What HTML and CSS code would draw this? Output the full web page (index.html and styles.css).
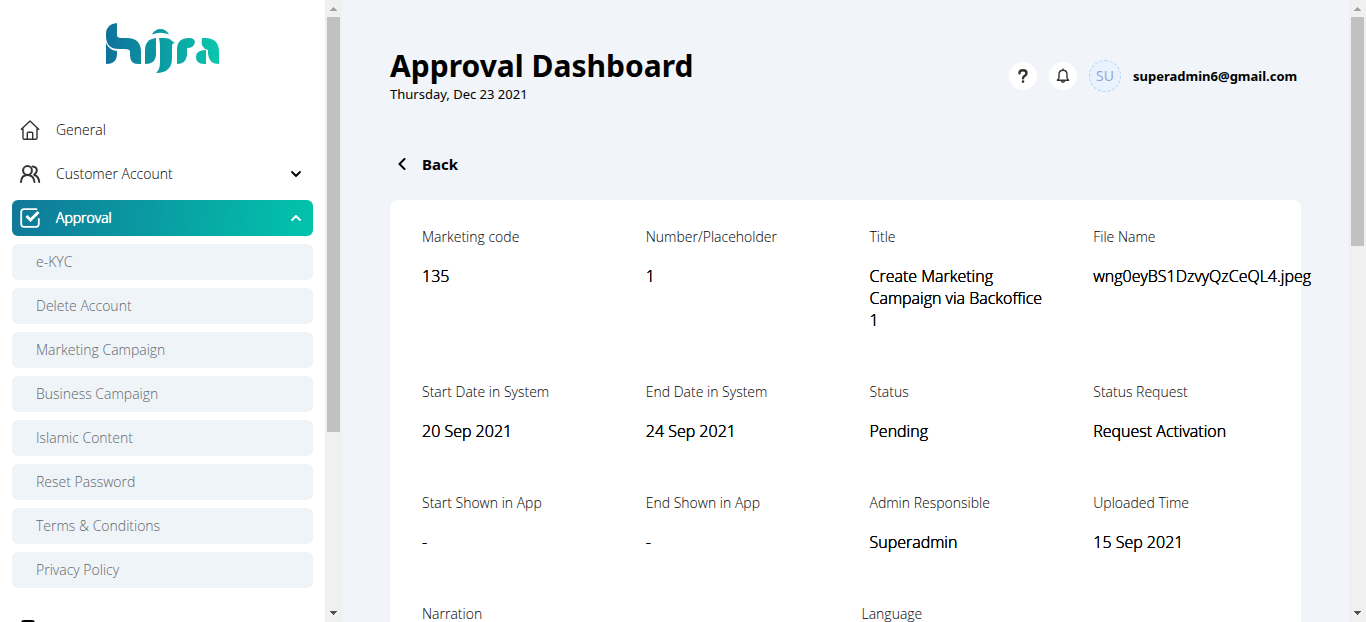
FILE: index.html
```html
<!DOCTYPE html>
<html lang="en">
<head>
<meta charset="utf-8">
<meta name="viewport" content="width=device-width, initial-scale=1">
<title>Approval Dashboard</title>
<link rel="stylesheet" href="styles.css">
</head>
<body>
<div class="app">
  <aside class="sidebar">
    <svg class="logo" viewBox="0 0 114 52" role="img" aria-label="hijra">
      <defs>
        <linearGradient id="brand" gradientUnits="userSpaceOnUse" x1="0" y1="0" x2="114" y2="0">
          <stop offset="0" stop-color="#0e719a"/>
          <stop offset="1" stop-color="#08c8ac"/>
        </linearGradient>
      </defs>
      <g fill="url(#brand)">
        <path d="M11 0V12Q11 15 15 15H21Q35 15 35 29V41H32Q24 41 24 32V28Q23 26 19 26H13Q0 26 0 13V11Q0 1 11 0Z"/>
        <path d="M0 20Q3 27 11 28V31Q11 41 0 41Z"/>
        <path d="M50 15V31Q50 41 39 41V28Q39 16 50 15Z"/>
        <path d="M46 11.500Q49 6 54.500 6Q60 6 63 11.500Q54.500 8 46 11.500Z"/>
        <path d="M53 15H58Q64 15 66 18L69 20Q66 20 66 23V35Q66 50 50 50Q54 47 54 39V24Q54 19 53 15Z"/>
        <path d="M71 41V25Q72 15 82 15H84Q88 15 89 19Q88 25 81 25V32Q80 41 71 41Z"/>
        <path d="M96 15H99Q113 15 113 29V41Q103 41 102 31V27Q94 25 96 15Z"/>
        <path d="M100 27V41H98Q90 41 90 34Q90 27 100 27Z"/>
      </g>
    </svg>
    <nav class="menu" aria-label="Main">
      <a class="item" href="#">
        <svg class="item-icon" viewBox="0 0 20 20"><path d="M1.300 9.200 10 1l8.700 8.200M3 8.500V18q0 1.200 1.200 1.200h11.600q1.200 0 1.200-1.200V8.500M7.300 19v-6q0-.8.8-.8h3.800q.8 0 .8.800v6"/></svg>
        <span>General</span>
      </a>
      <button class="item" type="button">
        <svg class="item-icon people" viewBox="0 0 20 20"><circle cx="7.500" cy="6.500" r="4.400"/><path d="M1 18q.3-7 6.500-7t7 7M12.500 2.400q4.300.2 4.300 4.100 0 2.500-2.600 4.200 4.600 1.600 5 7.300"/></svg>
        <span>Customer Account</span>
        <svg class="chevron" viewBox="0 0 10 6"><path d="m1 1 4 4 4-4"/></svg>
      </button>
      <button class="item active" type="button" aria-expanded="true">
        <svg class="item-icon" viewBox="0 0 20 20"><path d="M16.500 1.200H4Q1.200 1.200 1.200 4v12Q1.200 18.800 4 18.800h12q2.800 0 2.800-2.800v-5"/><path class="tick" d="m6.500 8 4 4 8-8"/></svg>
        <span>Approval</span>
        <svg class="chevron" viewBox="0 0 10 6"><path d="m1 5 4-4 4 4"/></svg>
      </button>
      <a class="subitem" href="#">e-KYC</a>
      <a class="subitem" href="#">Delete Account</a>
      <a class="subitem" href="#">Marketing Campaign</a>
      <a class="subitem" href="#">Business Campaign</a>
      <a class="subitem" href="#">Islamic Content</a>
      <a class="subitem" href="#">Reset Password</a>
      <a class="subitem" href="#">Terms &amp; Conditions</a>
      <a class="subitem" href="#">Privacy Policy</a>
      <a class="item next" href="#" aria-label="Next section">
        <svg class="item-icon solid" viewBox="0 0 20 20"><rect x="1" y="0" width="14" height="20" rx="3"/></svg>
      </a>
    </nav>
  </aside>
  <div class="scrollbar" aria-hidden="true">
    <svg class="arrow faint" viewBox="0 0 7 4"><path d="M3 0h1v1h1v1h1v1h1v1H0V3h1V2h1V1h1z"/></svg>
    <div class="track"><div class="thumb side-thumb"></div></div>
    <svg class="arrow" viewBox="0 0 7 4"><path d="M0 0h7v1H6v1H5v1H4v1H3V3H2V2H1V1H0z"/></svg>
  </div>
  <main class="main">
    <header class="header">
      <div>
        <h1 class="title">Approval Dashboard</h1>
        <p class="date">Thursday, Dec 23 2021</p>
      </div>
      <div class="account">
        <button class="round" type="button" aria-label="Help">
          <svg class="help" viewBox="0 0 10 14"><path d="M1.500 4.200Q1.500 1.300 5 1.300t3.500 2.900q0 1.500-1.700 2.500T5 9.400"/><circle cx="5" cy="12.600" r="1.300"/></svg>
        </button>
        <button class="round" type="button" aria-label="Notifications">
          <svg class="bell" viewBox="0 0 14 16"><path d="M7 1v1.200M7 2.200q4 0 4 4.300v3q0 1.200 1.700 2.700H1.300Q3 10.700 3 9.500v-3Q3 2.200 7 2.200zM5.300 12.500q.2 1.700 1.700 1.700t1.700-1.700"/></svg>
        </button>
        <span class="avatar">SU</span>
        <span class="email">superadmin6@gmail.com</span>
      </div>
    </header>
    <a class="back" href="#">
      <svg class="back-icon" viewBox="0 0 8 12"><path d="M6.500 1 1.500 6l5 5"/></svg>
      <span>Back</span>
    </a>
    <section class="card">
      <dl class="fields">
        <div><dt>Marketing code</dt><dd>135</dd></div>
        <div><dt>Number/Placeholder</dt><dd>1</dd></div>
        <div><dt>Title</dt><dd>Create Marketing Campaign via Backoffice 1</dd></div>
        <div><dt>File Name</dt><dd>wng0eyBS1DzvyQzCeQL4.jpeg</dd></div>
        <div><dt>Start Date in System</dt><dd>20 Sep 2021</dd></div>
        <div><dt>End Date in System</dt><dd>24 Sep 2021</dd></div>
        <div><dt>Status</dt><dd>Pending</dd></div>
        <div><dt>Status Request</dt><dd>Request Activation</dd></div>
        <div><dt>Start Shown in App</dt><dd>-</dd></div>
        <div><dt>End Shown in App</dt><dd>-</dd></div>
        <div><dt>Admin Responsible</dt><dd>Superadmin</dd></div>
        <div><dt>Uploaded Time</dt><dd>15 Sep 2021</dd></div>
      </dl>
      <dl class="fields halves">
        <div><dt>Narration</dt></div>
        <div><dt>Language</dt></div>
      </dl>
    </section>
  </main>
  <div class="scrollbar" aria-hidden="true">
    <svg class="arrow faint" viewBox="0 0 7 4"><path d="M3 0h1v1h1v1h1v1h1v1H0V3h1V2h1V1h1z"/></svg>
    <div class="track"><div class="thumb page-thumb"></div></div>
    <svg class="arrow" viewBox="0 0 7 4"><path d="M0 0h7v1H6v1H5v1H4v1H3V3H2V2H1V1H0z"/></svg>
  </div>
</div>
</body>
</html>
```
FILE: styles.css
```css
* {
  box-sizing: border-box;
}

body {
  margin: 0;
  color: #000;
  font-family: "Open Sans", "Noto Sans", sans-serif;
  font-size: 14px;
  line-height: 20px;
}

h1, p, dl, dd {
  margin: 0;
}

a {
  color: inherit;
  text-decoration: none;
}

button {
  border: 0;
  background: none;
  color: inherit;
  font: inherit;
  text-align: left;
}

svg {
  display: block;
  flex: none;
  fill: none;
  stroke-linecap: round;
  stroke-linejoin: round;
}

.app {
  display: flex;
  height: 100vh;
  overflow: hidden;
  background: #f1f5fa;
}

/* Sidebar */
.sidebar {
  flex: none;
  width: 325px;
  padding: 23px 12px 0;
  overflow: hidden;
  background: #fff;
}

.logo {
  width: 114px;
  height: 52px;
  margin: 0 auto 37px;
}

.menu {
  display: flex;
  flex-direction: column;
  gap: 8px;
}

.item,
.subitem {
  display: flex;
  align-items: center;
  height: 36px;
  border-radius: 6px;
  font-weight: 300;
}

.item {
  gap: 16px;
  width: 100%;
  padding: 0 12px 0 8px;
}

.item-icon {
  width: 20px;
  height: 20px;
  overflow: visible;
  stroke: #333;
  stroke-width: 1.4;
}

.people {
  stroke-width: 2;
}

.item.active {
  background: linear-gradient(100deg, #107899, #02c4ac);
  color: #fff;
  text-shadow: 0 0 0 #fff, 0 0 0 #fff, 0 0 1px #fff;
}

.active .item-icon {
  stroke: #fff;
  stroke-width: 1.8;
}

.active .tick {
  stroke-width: 3;
  stroke-linecap: butt;
  stroke-linejoin: miter;
}

.chevron {
  width: 10px;
  height: 6px;
  margin-left: auto;
  stroke: #000;
  stroke-width: 1.8;
}

.active .chevron {
  stroke: #fff;
}

.subitem {
  padding: 0 24px;
  background: #eff4f9;
  color: #62666b;
}

.item.next {
  margin-top: 16px;
}

.item-icon.solid {
  fill: #000;
  stroke: none;
}

/* Scrollbars */
.scrollbar {
  display: flex;
  flex: none;
  flex-direction: column;
  align-items: center;
  gap: 6px;
  width: 17px;
  padding: 7px 0;
  background: #f0f0f0;
}

.arrow {
  width: 7px;
  height: 4px;
  fill: #505050;
}

.arrow.faint {
  fill: #a3a3a3;
}

.track {
  flex: 1;
  width: 13px;
}

.thumb {
  background: #c1c1c1;
}

.side-thumb {
  height: 70.5%;
}

.page-thumb {
  height: 39%;
}

/* Page content */
.main {
  flex: 1;
  min-width: 0;
  padding: 46px 48px 0;
  overflow: hidden;
}

.header {
  display: flex;
  align-items: center;
  justify-content: space-between;
}

.title {
  font-family: "Noto Sans", sans-serif;
  font-size: 30px;
  font-weight: 700;
  line-height: 40px;
}

.date {
  font-family: "Noto Sans", sans-serif;
  font-size: 13px;
  line-height: 16px;
}

.account {
  display: flex;
  align-items: center;
  gap: 12px;
  padding-top: 4px;
}

.round {
  display: flex;
  align-items: center;
  justify-content: center;
  width: 28px;
  height: 28px;
  padding: 0;
  border-radius: 50%;
  background: #fff;
}

.help {
  width: 10px;
  height: 14px;
  stroke: #333;
  stroke-width: 2.4;
}

.help circle {
  fill: #333;
  stroke: none;
}

.bell {
  width: 14px;
  height: 16px;
  stroke: #333;
  stroke-width: 1.4;
}

.avatar {
  display: flex;
  align-items: center;
  justify-content: center;
  width: 32px;
  height: 32px;
  border: 1px dashed #b5d3fb;
  border-radius: 50%;
  background: #e8f3ff;
  color: #979fd3;
}

.email {
  min-width: 168px;
  font-family: "Noto Sans", sans-serif;
  font-size: 13px;
  font-weight: 700;
}

.back {
  display: inline-flex;
  align-items: center;
  gap: 16px;
  margin: 52px 0 26px;
  padding-left: 8px;
  font-family: "Noto Sans", sans-serif;
  font-size: 15px;
  font-weight: 700;
}

.back-icon {
  width: 8px;
  height: 12px;
  stroke: #000;
  stroke-width: 2;
}

.card {
  padding: 27px 32px;
  border-radius: 8px;
  background: #fff;
}

.fields {
  display: grid;
  grid-template-columns: repeat(4, minmax(0, 1fr));
  gap: 51px 48px;
}

.fields.halves {
  grid-template-columns: repeat(2, minmax(0, 1fr));
  column-gap: 32px;
  margin-top: 51px;
}

.fields dt {
  font-weight: 300;
}

.fields dd {
  margin-top: 18px;
  font-size: 16px;
  font-weight: 300;
  line-height: 22px;
  text-shadow: 0 0 0 #000, 0 0 0 #000;
}
```
